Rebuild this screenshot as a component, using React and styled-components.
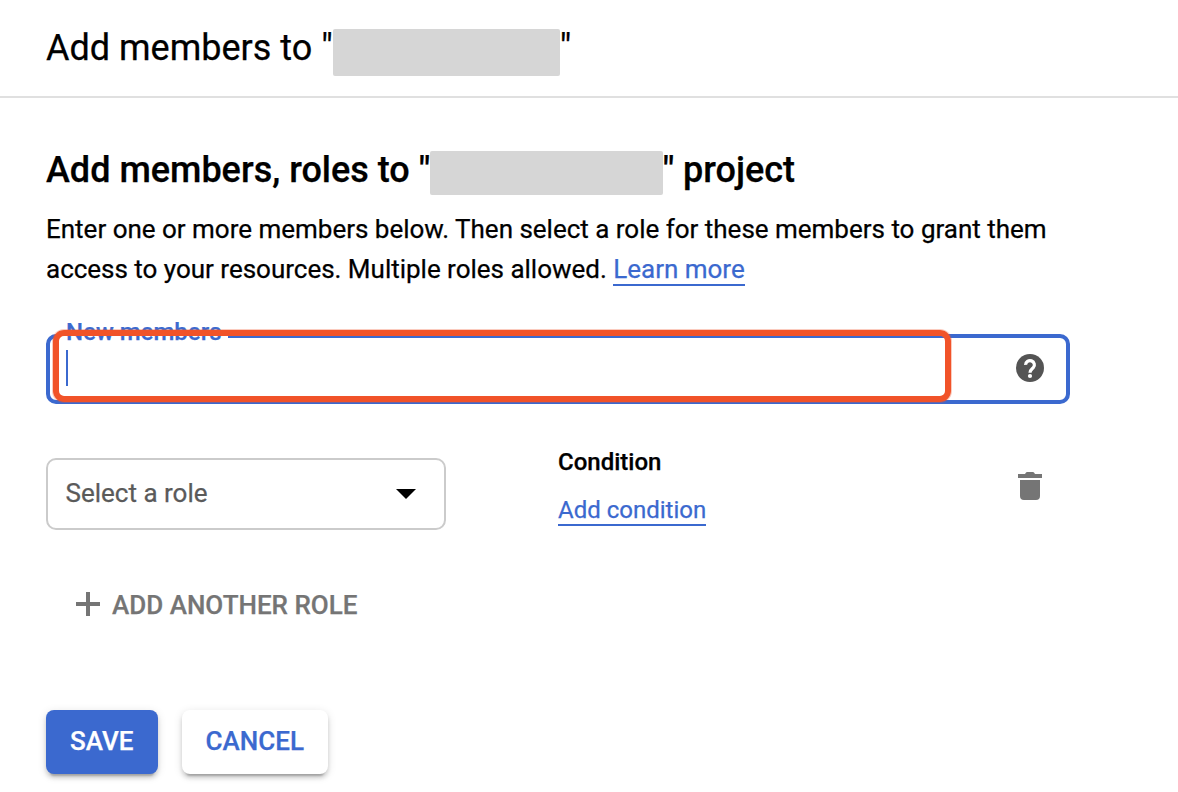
import React from "react";
import styled, { createGlobalStyle } from "styled-components";

const GlobalStyle = createGlobalStyle`
  *, *::before, *::after { box-sizing: border-box; }
  body { margin: 0; background: #fff; color: #000; font-family: Roboto, "Liberation Sans", sans-serif; -webkit-text-stroke: 0.25px currentColor; }
  button { font-family: inherit; cursor: pointer; }
`;

const Page = styled.div`
  width: 1178px;
  height: 792px;
  overflow: hidden;
  background: #fff;
`;

const Header = styled.header`
  display: flex;
  align-items: center;
  height: 98px;
  padding: 0 46px;
  border-bottom: 2px solid #e0e0e0;
`;

const Title = styled.h1`
  display: flex;
  align-items: center;
  margin: 0;
  height: 48px;
  font-size: 36px;
  line-height: 48px;
  font-weight: ${(p) => p.$weight || 400};
  white-space: pre;
`;

const Redacted = styled.span`
  width: ${(p) => p.$width}px;
  height: ${(p) => p.$height}px;
  margin-top: ${(p) => p.$drop}px;
  background: #d6d6d6;
  border-radius: 2px;
`;

const Form = styled.main`
  display: flex;
  flex-direction: column;
  align-items: flex-start;
  padding: 48px 0 0 46px;
`;

const Description = styled.p`
  margin: 15px 0 0;
  width: 1024px;
  font-size: 26px;
  line-height: 40px;
  letter-spacing: -0.01px;
`;

const Link = styled.a`
  display: inline-block;
  color: #3b69cf;
  font-size: ${(p) => p.$size || 26}px;
  line-height: ${(p) => p.$line || 30}px;
  border-bottom: 2px solid #3b69cf;
  text-decoration: none;
`;

const Field = styled.div`
  position: relative;
  display: flex;
  align-items: center;
  justify-content: space-between;
  width: 1024px;
  height: 70px;
  margin-top: 45px;
  padding: 0 19px 0 16px;
  border: 4px solid #3b69cf;
  border-radius: 10px;
`;

const FieldLabel = styled.label`
  position: absolute;
  left: 8px;
  top: -20px;
  width: 170px;
  padding-left: 8px;
  background: #fff;
  color: #3b69cf;
  font-size: 24px;
  line-height: 28px;
  font-weight: 500;
  white-space: nowrap;
`;

const Caret = styled.span`
  width: 2px;
  height: 36px;
  margin-bottom: 2px;
  background: #3b69cf;
`;

const Highlight = styled.div`
  position: absolute;
  left: 3px;
  top: -8px;
  width: 898px;
  height: 72px;
  border: 6px solid #f15329;
  border-radius: 11px;
  box-shadow: 0 0 0 1px rgba(241, 83, 41, 0.3);
`;

const RoleRow = styled.div`
  display: grid;
  grid-template-columns: 400px 388px 1fr;
  column-gap: 112px;
  width: 1024px;
  height: 82px;
  margin-top: 44px;
`;

const Select = styled.div`
  display: flex;
  align-items: center;
  justify-content: space-between;
  height: 72px;
  margin-top: 10px;
  padding: 0 28px 2px 17.5px;
  border: 2px solid #cbcbcb;
  border-radius: 10px;
  color: #5a5a5a;
  font-size: 26px;
  line-height: 32px;
`;

const Condition = styled.div`
  display: flex;
  flex-direction: column;
  align-items: flex-start;
  gap: 20px;
`;

const ConditionTitle = styled.span`
  font-size: 24px;
  line-height: 28px;
  font-weight: 500;
`;

const IconSlot = styled.div`
  display: flex;
  width: 36px;
  margin-left: -46px;
  padding-top: 20px;
`;

const AddRole = styled.button`
  display: flex;
  align-items: center;
  gap: 6px;
  height: 36px;
  margin: 56px 0 0 24px;
  padding: 0;
  border: 0;
  background: none;
  color: #757575;
  font-size: 26px;
  line-height: 36px;
  font-weight: 500;
`;

const AddRoleText = styled.span`
  padding-top: 2px;
`;

const Actions = styled.div`
  display: flex;
  gap: 24px;
  margin-top: 88px;
`;

const Button = styled.button`
  width: ${(p) => p.$width}px;
  height: 64px;
  padding: 0 0.500px 2px 0;
  border: 0;
  border-radius: 8px;
  background: ${(p) => (p.$primary ? "#3b69cf" : "#fff")};
  color: ${(p) => (p.$primary ? "#fff" : "#3b69cf")};
  font-size: 26px;
  font-weight: 500;
  box-shadow: 0 6px 2px -4px rgba(0, 0, 0, 0.2), 0 4px 4px 0 rgba(0, 0, 0, 0.14), 0 2px 10px 0 rgba(0, 0, 0, 0.12);
`;

const Help = styled.svg`
  margin-bottom: 2px;
`;

const HelpIcon = () => (
  <Help width="34" height="34" viewBox="0 0 34 34">
    <circle cx="17" cy="17" r="14" fill="#545454" />
    <path d="M12.600 13.900a4.400 4.200 0 1 1 7.700 2.700C18.700 18.300 17 18.900 17 21.700" fill="none" stroke="#fff" strokeWidth="3.200" />
    <circle cx="17" cy="25" r="2.100" fill="#fff" />
  </Help>
);

const TrashIcon = () => (
  <svg width="36" height="36" viewBox="0 0 36 36" fill="#757575">
    <path d="M6 6h7l1-1.5Q14.400 4 15 4h6q.6 0 1 .5L23 6h7v4H6zM8 12h20v16q0 4-4 4H12q-4 0-4-4z" />
  </svg>
);

const Arrow = styled.svg`
  margin-top: 2px;
`;

const ArrowIcon = () => (
  <Arrow width="20" height="10" viewBox="0 0 20 10">
    <path d="M0 0h20L10 10z" />
  </Arrow>
);

const PlusIcon = () => (
  <svg width="36" height="36" viewBox="0 0 36 36" fill="#757575">
    <path d="M16 6h4v10h10v4H20v10h-4V20H6v-4h10z" />
  </svg>
);

export default function App() {
  return (
    <>
      <GlobalStyle />
      <Page>
        <Header>
          <Title>
            Add members to "<Redacted $width={227} $height={47} $drop={8} />"
          </Title>
        </Header>
        <Form>
          <Title as="h2" $weight={500}>
            Add members, roles to "<Redacted $width={232.4} $height={44} $drop={6} />" project
          </Title>
          <Description>
            Enter one or more members below. Then select a role for these members to grant them access to your
            resources. Multiple roles allowed. <Link>Learn more</Link>
          </Description>
          <Field>
            <FieldLabel>New members</FieldLabel>
            <Caret />
            <HelpIcon />
            <Highlight />
          </Field>
          <RoleRow>
            <Select>
              Select a role
              <ArrowIcon />
            </Select>
            <Condition>
              <ConditionTitle>Condition</ConditionTitle>
              <Link $size={24} $line={28}>Add condition</Link>
            </Condition>
            <IconSlot>
              <TrashIcon />
            </IconSlot>
          </RoleRow>
          <AddRole>
            <PlusIcon />
            <AddRoleText>ADD ANOTHER ROLE</AddRoleText>
          </AddRole>
          <Actions>
            <Button $primary $width={112}>SAVE</Button>
            <Button $width={146}>CANCEL</Button>
          </Actions>
        </Form>
      </Page>
    </>
  );
}
